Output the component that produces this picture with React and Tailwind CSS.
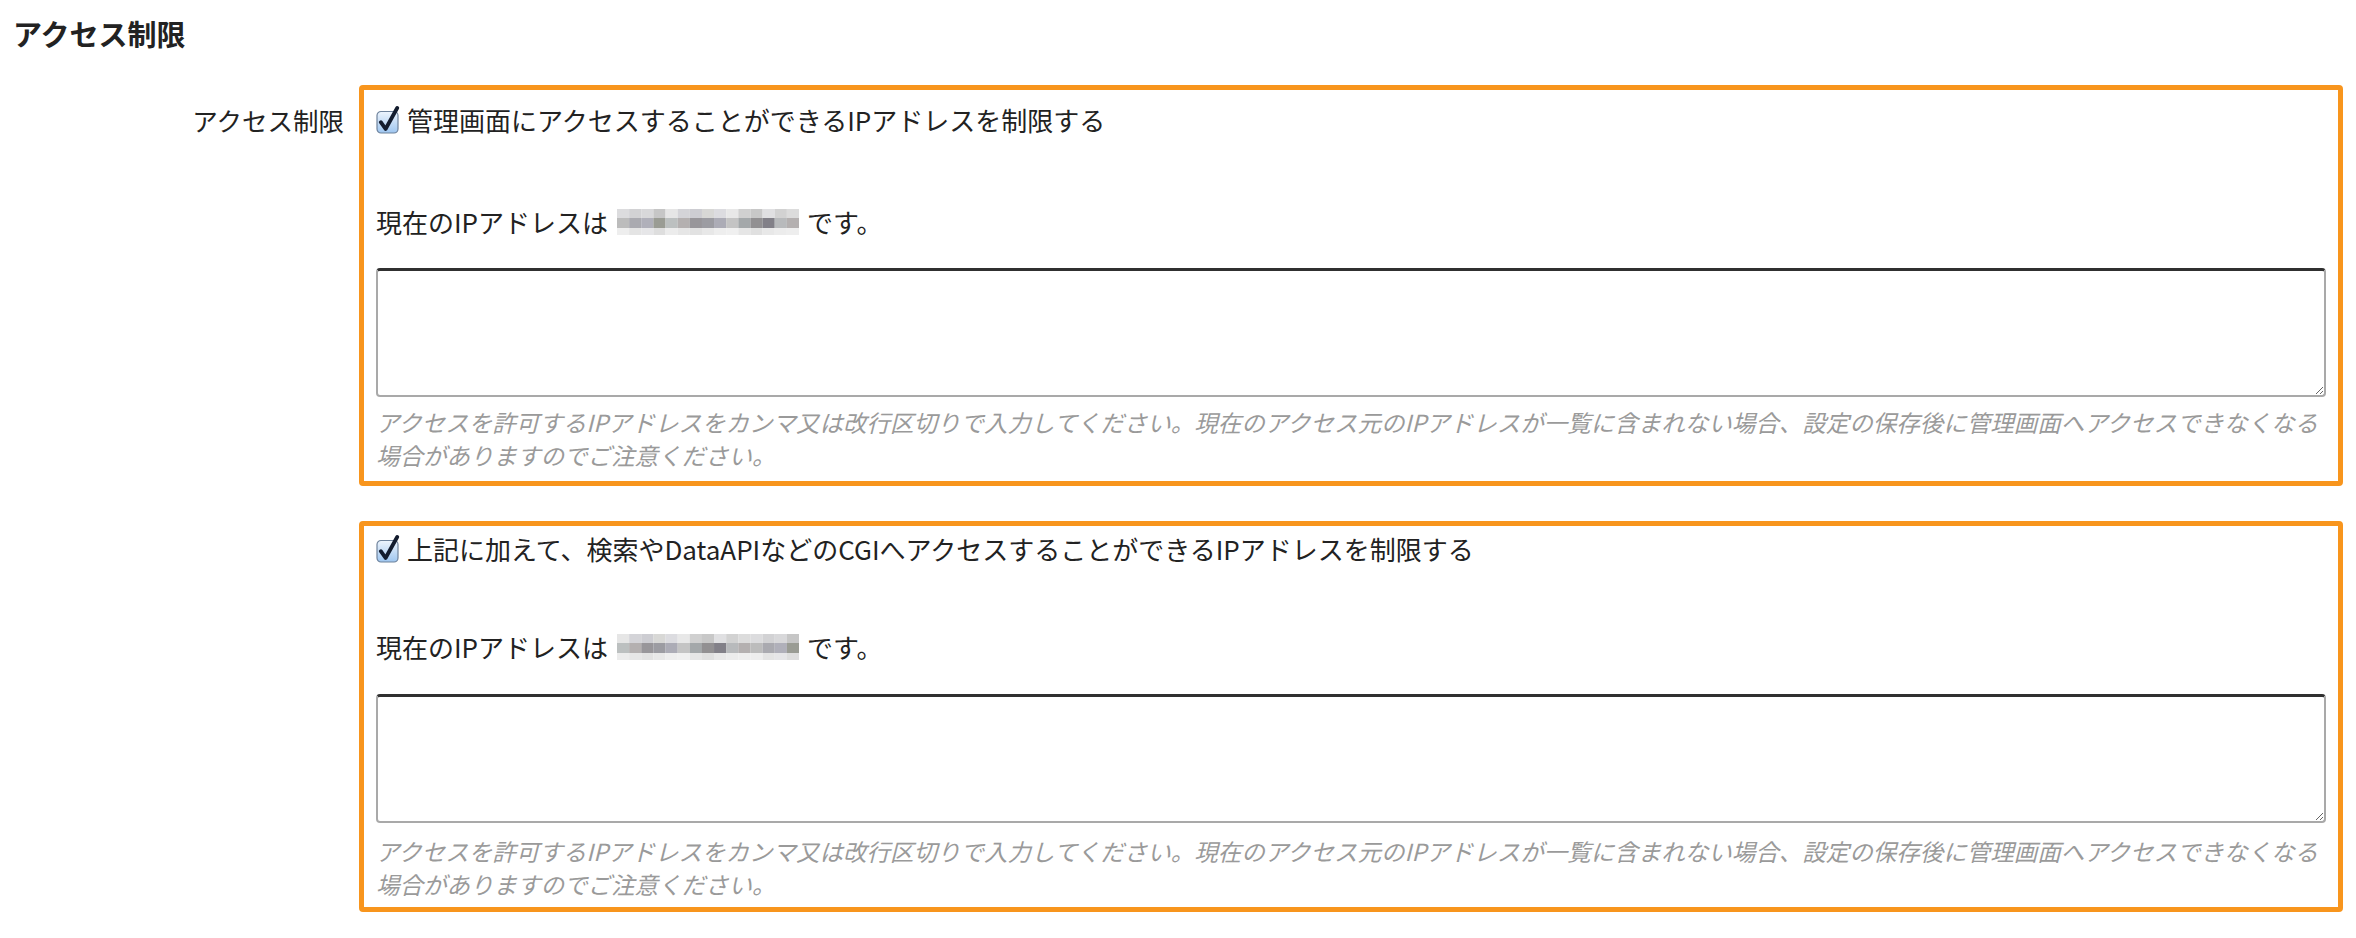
import React from "react";

function CheckIcon() {
  return (
    <svg width="24" height="28" viewBox="0 0 24 28" className="shrink-0">
      <defs>
        <linearGradient id="cbg" x1="0" y1="0" x2="0" y2="1">
          <stop offset="0" stopColor="#eef5fd" />
          <stop offset="0.5" stopColor="#c6ddf6" />
          <stop offset="1" stopColor="#9ec6f0" />
        </linearGradient>
      </defs>
      <rect x="1" y="5.5" width="21" height="21.5" rx="4" fill="url(#cbg)" stroke="#6f839c" strokeWidth="1.2" />
      <path d="M4.8 16.2 L9.6 23 L21.2 2" fill="none" stroke="#131c2e" strokeWidth="3.8" strokeLinecap="round" strokeLinejoin="round" />
    </svg>
  );
}

const ROWS = [
  ["#dcdcde", "#d2d2d4", "#d8d8da", "#c6c6c6", "#e6e6e6", "#d4d4d8", "#cdcdd2", "#d8d8d6", "#dcdce0", "#e8e8e8", "#d0d0d0", "#c8c8c8", "#e0e0e2", "#d2d2d2", "#dcdcdc"],
  ["#bcbcbc", "#aaaab0", "#b0b0ba", "#9a9c94", "#bcc0c0", "#b4b0b0", "#98969a", "#9c9ca2", "#acacb6", "#c4c4c4", "#a4a8aa", "#929092", "#828088", "#b8babc", "#b4b0b0"],
  ["#eeeeee", "#e4e4e4", "#e6e6e8", "#dedede", "#ececec", "#e6e6e6", "#e2e2e2", "#e8e8e8", "#eeeeee", "#f0f0f0", "#e6e6e6", "#e0e0e0", "#e8e8e8", "#ececec", "#eeeeee"],
];

function BlurredIP({ variant = 0 }) {
  const heights = [9, 10, 7];
  const ys = [0, 9, 19];
  return (
    <svg width="182" height="26" viewBox="0 0 182 26" className="shrink-0">
      {ROWS.map((row, r) =>
        row.map((c, i) => {
          const idx = (i + variant * 4) % row.length;
          return (
            <rect key={r + "-" + i} x={i * 12.13} y={ys[r]} width="12.2" height={heights[r]} fill={row[idx]} />
          );
        })
      )}
    </svg>
  );
}

function Section({ title, padTop, gap1, gap2, gap3, padBottom, variant }) {
  return (
    <div className={`border-[5px] border-[#f8951d] rounded-[4px] px-[12px] ${padTop} ${padBottom}`}>
      <label className="flex items-center h-[40px] gap-[7px] text-[26px] text-[#222] leading-none">
        <CheckIcon />
        <span>{title}</span>
      </label>
      <div className={`flex items-center h-[40px] text-[26px] text-[#222] leading-none ${gap1}`}>
        <span>現在のIPアドレスは</span>
        <span className="ml-[9px] mr-[8px] flex items-center">
          <BlurredIP variant={variant} />
        </span>
        <span>です。</span>
      </div>
      <textarea
        className={`block w-full h-[129px] bg-white border-2 border-[#a9a9a9] border-t-[3px] border-t-[#303030] rounded-[4px] outline-none ${gap2}`}
      />
      <div className={`text-[23.5px] leading-[33px] italic text-[#9a9a9a] ${gap3}`}>
        <div className="whitespace-nowrap">
          アクセスを許可するIPアドレスをカンマ又は改行区切りで入力してください。現在のアクセス元のIPアドレスが一覧に含まれない場合、設定の保存後に管理画面へアクセスできなくなる
        </div>
        <div className="whitespace-nowrap">場合がありますのでご注意ください。</div>
      </div>
    </div>
  );
}

export default function App() {
  return (
    <div
      className="w-[2356px] h-[938px] bg-white overflow-hidden"
      style={{ fontFamily: '"Noto Sans CJK JP", "Noto Sans", sans-serif' }}
    >
      <div className="h-[66px] flex items-center pl-[13px]">
        <h2 className="text-[29px] font-bold text-[#222] leading-none">アクセス制限</h2>
      </div>
      <div className="flex mt-[19px]">
        <div className="w-[344px] shrink-0 pt-[15px]">
          <div className="h-[40px] flex items-center justify-end text-[25.5px] text-[#222] leading-none">
            アクセス制限
          </div>
        </div>
        <div className="ml-[15px] w-[1984px] flex flex-col gap-[35px]">
          <Section
            title="管理画面にアクセスすることができるIPアドレスを制限する"
            padTop="pt-[10px]"
            gap1="mt-[62px]"
            gap2="mt-[26px]"
            gap3="mt-[9px]"
            padBottom="pb-[9px]"
            variant={0}
          />
          <Section
            title="上記に加えて、検索やDataAPIなどのCGIへアクセスすることができるIPアドレスを制限する"
            padTop="pt-[3px]"
            gap1="mt-[58px]"
            gap2="mt-[27px]"
            gap3="mt-[12px]"
            padBottom="pb-[6px]"
            variant={1}
          />
        </div>
      </div>
    </div>
  );
}
